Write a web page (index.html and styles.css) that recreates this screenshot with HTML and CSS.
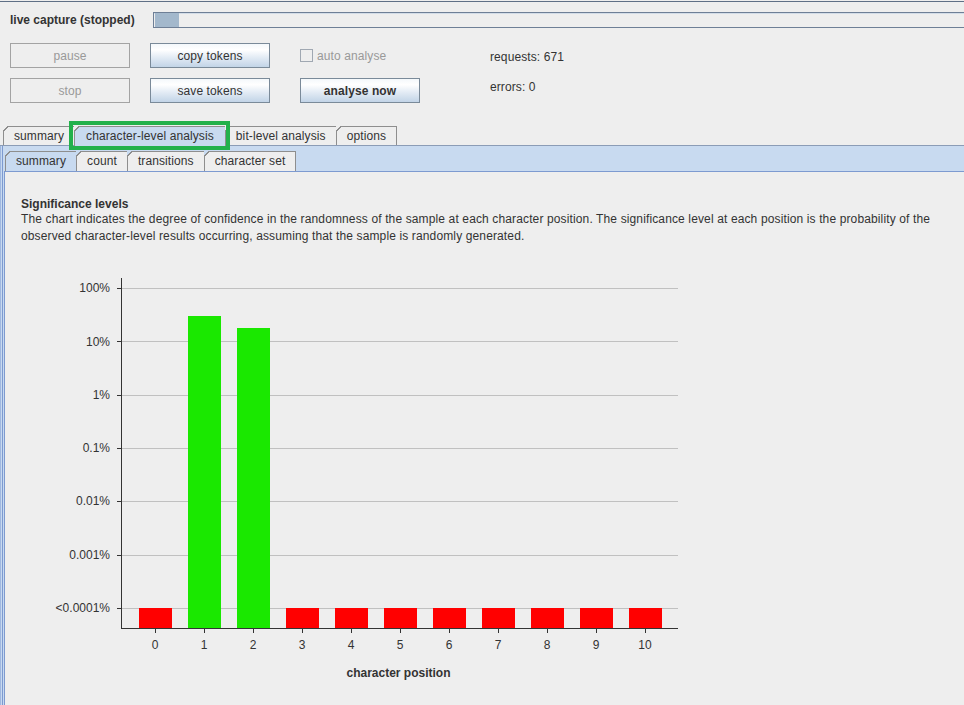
FILE: index.html
```html
<!DOCTYPE html>
<html>
<head>
<meta charset="utf-8">
<link rel="stylesheet" href="styles.css">
</head>
<body>
<div class="topline"></div>
<div class="header">
  <span class="capture-label">live capture (stopped)</span>
  <div class="progress"><div class="progress-fill"></div></div>
</div>
<div class="controls">
  <button class="btn disabled">pause</button>
  <button class="btn">copy tokens</button>
  <label class="check"><span class="box"></span>auto analyse</label>
  <span class="stat">requests: 671</span>
  <button class="btn disabled">stop</button>
  <button class="btn">save tokens</button>
  <button class="btn strong">analyse now</button>
  <span class="stat stat-top">errors: 0</span>
</div>
<div class="tabs outer-tabs">
  <div class="tab">summary</div>
  <div class="tab selected">character-level analysis</div>
  <div class="tab">bit-level analysis</div>
  <div class="tab">options</div>
</div>
<div class="highlight"></div>
<div class="outer-pane">
  <div class="tabs sub-tabs">
    <div class="tab selected">summary</div>
    <div class="tab">count</div>
    <div class="tab">transitions</div>
    <div class="tab">character set</div>
  </div>
  <div class="inner-content">
    <div class="text">
      <div class="heading">Significance levels</div>
      <p class="desc">The chart indicates the degree of confidence in the randomness of the sample at each character position. The significance level at each position is the probability of the<br>observed character-level results occurring, assuming that the sample is randomly generated.</p>
    </div>
    <svg class="chart" width="700" height="440" viewBox="5 250 700 440" xmlns="http://www.w3.org/2000/svg">
      <g class="grid" stroke="#c0c0c0" stroke-width="1">
        <line x1="122" x2="678" y1="288.5" y2="288.5"/>
        <line x1="122" x2="678" y1="341.5" y2="341.5"/>
        <line x1="122" x2="678" y1="395.5" y2="395.5"/>
        <line x1="122" x2="678" y1="448.5" y2="448.5"/>
        <line x1="122" x2="678" y1="501.5" y2="501.5"/>
        <line x1="122" x2="678" y1="555.5" y2="555.5"/>
        <line x1="122" x2="678" y1="608.5" y2="608.5"/>
      </g>
      <g fill="#ff0000">
        <rect x="139" y="608" width="33" height="20"/>
        <rect x="286" y="608" width="33" height="20"/>
        <rect x="335" y="608" width="33" height="20"/>
        <rect x="384" y="608" width="33" height="20"/>
        <rect x="433" y="608" width="33" height="20"/>
        <rect x="482" y="608" width="33" height="20"/>
        <rect x="531" y="608" width="33" height="20"/>
        <rect x="580" y="608" width="33" height="20"/>
        <rect x="629" y="608" width="33" height="20"/>
      </g>
      <g fill="#1ae800">
        <rect x="188" y="316" width="33" height="312"/>
        <rect x="237" y="328" width="33" height="300"/>
      </g>
      <g stroke="#333" stroke-width="1">
        <line x1="121.5" x2="121.5" y1="278" y2="629"/>
        <line x1="121" x2="678" y1="628.5" y2="628.5"/>
        <line x1="117" x2="121" y1="288.5" y2="288.5"/>
        <line x1="117" x2="121" y1="341.5" y2="341.5"/>
        <line x1="117" x2="121" y1="395.5" y2="395.5"/>
        <line x1="117" x2="121" y1="448.5" y2="448.5"/>
        <line x1="117" x2="121" y1="501.5" y2="501.5"/>
        <line x1="117" x2="121" y1="555.5" y2="555.5"/>
        <line x1="117" x2="121" y1="608.5" y2="608.5"/>
        <line x1="155.5" x2="155.5" y1="629" y2="633"/>
        <line x1="204.5" x2="204.5" y1="629" y2="633"/>
        <line x1="253.5" x2="253.5" y1="629" y2="633"/>
        <line x1="302.5" x2="302.5" y1="629" y2="633"/>
        <line x1="351.5" x2="351.5" y1="629" y2="633"/>
        <line x1="400.5" x2="400.5" y1="629" y2="633"/>
        <line x1="449.5" x2="449.5" y1="629" y2="633"/>
        <line x1="498.5" x2="498.5" y1="629" y2="633"/>
        <line x1="547.5" x2="547.5" y1="629" y2="633"/>
        <line x1="596.5" x2="596.5" y1="629" y2="633"/>
        <line x1="645.5" x2="645.5" y1="629" y2="633"/>
      </g>
      <g class="ylabels" text-anchor="end">
        <text x="110" y="292">100%</text>
        <text x="110" y="346">10%</text>
        <text x="110" y="399">1%</text>
        <text x="110" y="452">0.1%</text>
        <text x="110" y="505">0.01%</text>
        <text x="110" y="559">0.001%</text>
        <text x="110" y="612">&lt;0.0001%</text>
      </g>
      <g class="xlabels" text-anchor="middle">
        <text x="155" y="649">0</text>
        <text x="204" y="649">1</text>
        <text x="253" y="649">2</text>
        <text x="302" y="649">3</text>
        <text x="351" y="649">4</text>
        <text x="400" y="649">5</text>
        <text x="449" y="649">6</text>
        <text x="498" y="649">7</text>
        <text x="547" y="649">8</text>
        <text x="596" y="649">9</text>
        <text x="645" y="649">10</text>
      </g>
      <text class="axis-title" x="398.5" y="677" text-anchor="middle">character position</text>
    </svg>
  </div>
</div>
</body>
</html>
```

FILE: styles.css
```css
* { box-sizing: border-box; }
html, body { margin: 0; height: 705px; overflow: hidden; }
body {
  background: #eeeeee;
  font: 12px "Liberation Sans", Arial, sans-serif;
  color: #333333;
  position: relative;
}
.topline { height: 1px; margin-top: 1px; background: #5f6f86; }
.header {
  display: flex;
  align-items: center;
  height: 16px;
  margin-top: 10px;
  padding-left: 10px;
}
.capture-label { width: 143px; font-weight: bold; line-height: 16px; white-space: nowrap; }
.progress {
  flex: 1;
  height: 16px;
  border: 1px solid #6e7f96;
  border-right: 0;
  padding-left: 1px;
  background: #eeeeee;
  box-shadow: inset 0 1px 0 #d3dde8;
}
.progress-fill { width: 24px; height: 100%; background: #a3b8cc; }

.controls {
  display: grid;
  grid-template-columns: 140px 150px 190px 1fr;
  grid-template-rows: 25px 25px;
  row-gap: 10px;
  margin-top: 15px;
  padding-left: 10px;
}
.btn {
  width: 120px;
  height: 25px;
  padding: 0;
  border: 1px solid #7a8a99;
  background: linear-gradient(to bottom, #f4f8fb 0%, #ffffff 25%, #e1eaf4 60%, #c2d4e7 100%);
  font: inherit;
  color: #333333;
  letter-spacing: 0.1px;
}
.btn.strong { font-weight: bold; }
.btn.disabled {
  border-color: #a3a3a3;
  background: #eeeeee;
  color: #999999;
}
.check { display: flex; align-items: center; gap: 4px; color: #999999; letter-spacing: 0.1px; }
.box { width: 13px; height: 13px; border: 1px solid #a0a8b2; background: #eeeeee; }
.stat { align-self: center; padding-top: 2px; letter-spacing: 0.1px; }
.stat-top { align-self: start; line-height: 15px; margin-top: 2px; padding-top: 0; }

.tabs { display: flex; --parent: #eeeeee; position: relative; z-index: 1; letter-spacing: 0.1px; }
.outer-tabs { margin-top: 23px; padding-left: 3px; height: 19px; }
.tab {
  position: relative;
  height: 19px;
  line-height: 18px;
  padding: 0 10px;
  border: 1px solid #8e8e8e;
  border-bottom: 0;
  margin-right: -1px;
  background: #eeeeee;
  white-space: nowrap;
}
.outer-tabs .tab.selected { padding: 0 11px; }
.tab::before {
  content: "";
  position: absolute;
  left: -1px;
  top: -1px;
  width: 7px;
  height: 7px;
  background: linear-gradient(135deg, var(--parent) 0 3.4px, #8e8e8e 3.4px 4.6px, transparent 4.6px);
}
.tab.selected { background: #c8daf0; }
.outer-tabs .tab.selected { height: 20px; }

.highlight {
  position: absolute;
  left: 69px;
  top: 121px;
  width: 161px;
  height: 29px;
  border: 4px solid #22b14c;
  z-index: 5;
}

.outer-pane {
  border-top: 1px solid #8b9cb6;
  padding: 5px 0 0 4px;
  background:
    linear-gradient(to right, #9fb7e0 0 1px, #c8daf0 1px 2px, #7d9ad0 2px 3px, #c8daf0 3px 4px) no-repeat left top / 4px 100%,
    #c8daf0;
}
.sub-tabs { --parent: #c8daf0; padding-left: 1px; height: 20px; }
.sub-tabs .tab { height: 20px; line-height: 19px; }

.inner-content {
  border-top: 1px solid #7d9ad0;
  border-left: 1px solid #7d9ad0;
  background: #eeeeee;
  height: 534px;
}
.text { padding: 25px 0 0 16px; }
.heading { font-weight: bold; line-height: 14px; }
.desc { margin: 0; line-height: 17px; white-space: nowrap; letter-spacing: 0.13px; }
.chart { display: block; margin-top: 5px; }
.chart text { font-family: "Liberation Sans", Arial, sans-serif; font-size: 12px; fill: #333333; }
.chart .axis-title { font-weight: bold; }
```
